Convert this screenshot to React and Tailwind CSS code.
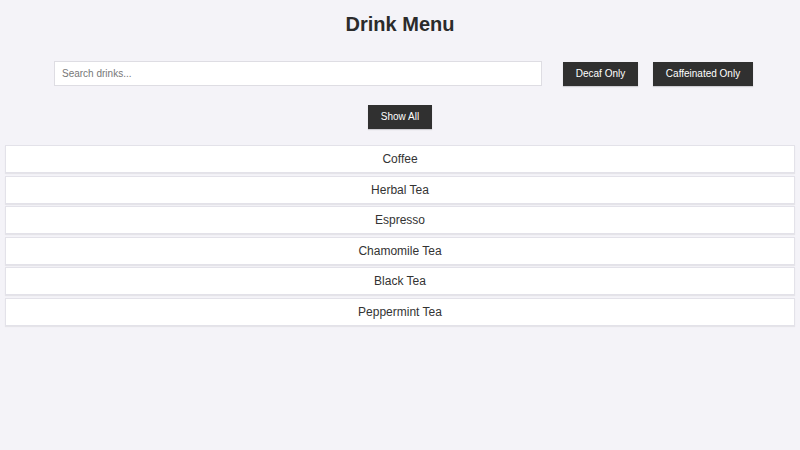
import { useState } from 'react'

const drinks = [
  { name: 'Coffee', decaf: false },
  { name: 'Herbal Tea', decaf: true },
  { name: 'Espresso', decaf: false },
  { name: 'Chamomile Tea', decaf: true },
  { name: 'Black Tea', decaf: false },
  { name: 'Peppermint Tea', decaf: true },
]

const buttonClassName =
  'h-[24px] px-[12px] bg-[#303030] text-white text-[10px] leading-none shadow-[0_1px_1px_rgba(0,0,0,0.15)] hover:bg-[#444] cursor-pointer'

export default function App() {
  const [query, setQuery] = useState('')
  const [filter, setFilter] = useState('all')

  const shown = drinks.filter((d) => {
    if (filter === 'decaf' && !d.decaf) return false
    if (filter === 'caffeinated' && d.decaf) return false
    return d.name.toLowerCase().includes(query.toLowerCase())
  })

  return (
    <div className="min-h-[450px] bg-[#f4f3f8] px-[5px] pt-[13px] font-['Liberation_Sans',Arial,sans-serif] text-[#333]">
      <h1 className="m-0 text-center text-[20px] leading-[23px] font-bold text-[#2b2b2b]">
        Drink Menu
      </h1>

      <div className="mt-[25px] flex items-center pl-[49px]">
        <input
          type="text"
          value={query}
          onChange={(e) => setQuery(e.target.value)}
          placeholder="Search drinks..."
          className="w-[488px] h-[25px] px-[7px] bg-white border border-[#dedde3] text-[10px] text-[#333] placeholder:text-[#777] outline-none"
        />
        <button
          onClick={() => setFilter('decaf')}
          className={`${buttonClassName} ml-[21px] w-[75px]`}
        >
          Decaf Only
        </button>
        <button
          onClick={() => setFilter('caffeinated')}
          className={`${buttonClassName} ml-[15px] w-[100px]`}
        >
          Caffeinated Only
        </button>
      </div>

      <div className="mt-[19px] flex justify-center">
        <button
          onClick={() => setFilter('all')}
          className={`${buttonClassName} w-[64px]`}
        >
          Show All
        </button>
      </div>

      <ul className="m-0 mt-[16px] p-0 list-none flex flex-col gap-[2.5px]">
        {shown.map((d) => (
          <li
            key={d.name}
            className="h-[28px] flex items-center justify-center bg-white border border-[#e3e2e9] shadow-[0_1px_1px_rgba(0,0,0,0.06)] text-[12px]"
          >
            {d.name}
          </li>
        ))}
      </ul>
    </div>
  )
}
